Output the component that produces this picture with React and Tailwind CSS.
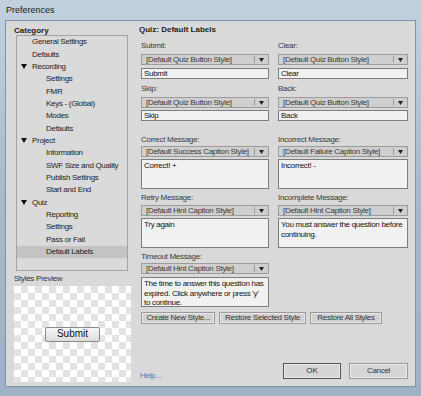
import React from "react";

const F = { fontFamily: '"Liberation Sans", Arial, sans-serif' };

function Tri() {
  return (
    <svg width="6" height="5" viewBox="0 0 6 5" className="shrink-0">
      <path d="M0 0 L6 0 L3 5 Z" fill="#111" />
    </svg>
  );
}

function TreeRow({ label, level, open, selected }) {
  return (
    <div
      className={`h-[12.35px] flex items-center text-[8px] tracking-[-0.3px] leading-none text-[#222] whitespace-nowrap ${
        selected ? "bg-[#c3c3c3]" : ""
      }`}
    >
      {level === 0 ? (
        <div className="w-[15px] pl-[4px] flex items-center">{open && <Tri />}</div>
      ) : (
        <div className={level === 1 ? "w-[15px]" : "w-[29px]"} />
      )}
      <span>{label}</span>
    </div>
  );
}

function Select({ text }) {
  return (
    <div className="h-[11px] flex items-center border border-[#9c9c9c] bg-[#cfcfcf] text-[8px] tracking-[-0.3px] leading-none text-[#3a3a3a]">
      <span className="flex-1 pl-[4px] whitespace-nowrap overflow-hidden">{text}</span>
      <div className="w-px h-[7px] bg-[#9a9a9a]" />
      <div className="w-[13px] flex justify-center">
        <svg width="5" height="4" viewBox="0 0 5 4">
          <path d="M0 0 L5 0 L2.5 4 Z" fill="#222" />
        </svg>
      </div>
    </div>
  );
}

function Input({ text, h = "h-[11px]", multi }) {
  return (
    <div
      className={`${h} border border-[#7d7d7d] bg-[#f1f1f1] text-[8px] tracking-[-0.3px] text-[#111] px-[2px] ${
        multi ? "pt-[1px] leading-[9.5px]" : "flex items-center leading-none"
      }`}
    >
      {text}
    </div>
  );
}

function Label({ text, mt }) {
  return (
    <div className={`${mt} h-[10px] flex items-center text-[8px] tracking-[-0.3px] leading-none text-[#3a3a3a] whitespace-nowrap`}>
      {text}
    </div>
  );
}

function Btn({ text, w }) {
  return (
    <div
      className={`${w} h-[12px] flex items-center justify-center whitespace-nowrap text-[8px] tracking-[-0.3px] leading-none text-[#333] bg-[#d2d2d2] border border-[#9a9a9a] shadow-[inset_0_0_0_1px_#e8e8e8]`}
    >
      {text}
    </div>
  );
}

export default function App() {
  const tree = [
    ["General Settings", 1],
    ["Defaults", 1],
    ["Recording", 0, true],
    ["Settings", 2],
    ["FMR", 2],
    ["Keys - (Global)", 2],
    ["Modes", 2],
    ["Defaults", 2],
    ["Project", 0, true],
    ["Information", 2],
    ["SWF Size and Quality", 2],
    ["Publish Settings", 2],
    ["Start and End", 2],
    ["Quiz", 0, true],
    ["Reporting", 2],
    ["Settings", 2],
    ["Pass or Fail", 2],
    ["Default Labels", 2, false, true],
  ];
  return (
    <div
      style={F}
      className="w-[421px] h-[396px] flex flex-col bg-gradient-to-b from-[#c3d0de] via-[#a9b9cb] to-[#9fb1c5] overflow-hidden"
    >
      <div className="h-[20px] pl-[6px] flex items-center text-[9px] text-[#1a1a1a] leading-none">
        Preferences
      </div>
      <div className="mx-[5px] h-[367px] border border-[#7f93aa] bg-[#d9d9d9] flex">
        {/* left */}
        <div className="w-[127px] flex flex-col pl-[8px]">
          <div className="mt-[5px] h-[10px] flex items-center text-[8px] font-bold leading-none text-[#222]">
            Category
          </div>
          <div className="ml-[2px] mt-[-1px] w-[112px] h-[236px] border border-[#a3a3a3] bg-[#dadada]">
            {tree.map(([l, lv, o, s], i) => (
              <TreeRow key={i} label={l} level={lv} open={o} selected={s} />
            ))}
          </div>
          <div className="mt-[3px] h-[10px] flex items-center text-[8px] tracking-[-0.3px] leading-none text-[#333]">
            Styles Preview
          </div>
          <div className="mt-[2px] w-[117px] h-[96px] flex items-center justify-center bg-[repeating-conic-gradient(#e3e3e3_0%_25%,#ffffff_0%_50%)] bg-[length:14px_14px]">
            <div className="w-[55px] h-[15px] flex items-center justify-center text-[10px] leading-none text-[#111] border border-[#8a8a8a] rounded-[2px] bg-gradient-to-b from-[#f8f8f8] to-[#dcdcdc]">
              Submit
            </div>
          </div>
        </div>
        {/* right */}
        <div className="flex-1 flex flex-col pl-[6px] pr-[7px]">
          <div className="mt-[4px] h-[10px] flex items-center text-[8px] font-bold leading-none text-[#222]">
            Quiz: Default Labels
          </div>
          <div className="pl-[2px] flex gap-[9px]">
            <div className="w-[128px] flex flex-col">
              <Label text="Submit:" mt="mt-[6px]" />
              <div className="mt-[3px]"><Select text="[Default Quiz Button Style]" /></div>
              <div className="mt-[3px]"><Input text="Submit" /></div>
              <Label text="Skip:" mt="mt-[5px]" />
              <div className="mt-[3px]"><Select text="[Default Quiz Button Style]" /></div>
              <div className="mt-[2px]"><Input text="Skip" /></div>
              <Label text="Correct Message:" mt="mt-[14px]" />
              <div className="mt-[1px]"><Select text="[Default Success Caption Style]" /></div>
              <div className="mt-[2px]"><Input text="Correct! +" h="h-[30px]" multi /></div>
              <Label text="Retry Message:" mt="mt-[4px]" />
              <div className="mt-[2px]"><Select text="[Default Hint Caption Style]" /></div>
              <div className="mt-[2px]"><Input text="Try again" h="h-[30px]" multi /></div>
              <Label text="Timeout Message:" mt="mt-[4px]" />
              <div className="mt-[1px]"><Select text="[Default Hint Caption Style]" /></div>
              <div className="mt-[3px]">
                <Input
                  text="The time to answer this question has expired. Click anywhere or press 'y' to continue."
                  h="h-[30px]"
                  multi
                />
              </div>
            </div>
            <div className="w-[130px] flex flex-col">
              <Label text="Clear:" mt="mt-[6px]" />
              <div className="mt-[3px]"><Select text="[Default Quiz Button Style]" /></div>
              <div className="mt-[3px]"><Input text="Clear" /></div>
              <Label text="Back:" mt="mt-[5px]" />
              <div className="mt-[3px]"><Select text="[Default Quiz Button Style]" /></div>
              <div className="mt-[2px]"><Input text="Back" /></div>
              <Label text="Incorrect Message:" mt="mt-[14px]" />
              <div className="mt-[1px]"><Select text="[Default Failure Caption Style]" /></div>
              <div className="mt-[2px]"><Input text="Incorrect! -" h="h-[30px]" multi /></div>
              <Label text="Incomplete Message:" mt="mt-[4px]" />
              <div className="mt-[2px]"><Select text="[Default Hint Caption Style]" /></div>
              <div className="mt-[2px]">
                <Input text="You must answer the question before continuing." h="h-[30px]" multi />
              </div>
            </div>
          </div>
          <div className="pl-[2px] mt-[5px] flex gap-[4px]">
            <Btn text="Create New Style..." w="w-[74px]" />
            <Btn text="Restore Selected Style" w="w-[87px]" />
            <Btn text="Restore All Styles" w="w-[72px]" />
          </div>
          <div className="flex-1" />
          <div className="mb-[6px] flex items-center">
            <div className="pl-[1px] text-[8px] tracking-[-0.3px] leading-none text-[#4a78b8] mt-[10px]">Help...</div>
            <div className="flex-1" />
            <div className="flex gap-[8px]">
              <div className="w-[58px] h-[16px] flex items-center justify-center text-[8px] leading-none text-[#333] bg-[#d6d6d6] border border-[#555] shadow-[inset_0_0_0_1px_#ececec]">
                OK
              </div>
              <div className="w-[59px] h-[16px] flex items-center justify-center text-[8px] tracking-[-0.3px] leading-none text-[#333] bg-[#d6d6d6] border border-[#9a9a9a] shadow-[inset_0_0_0_1px_#ececec]">
                Cancel
              </div>
            </div>
          </div>
        </div>
      </div>
    </div>
  );
}
